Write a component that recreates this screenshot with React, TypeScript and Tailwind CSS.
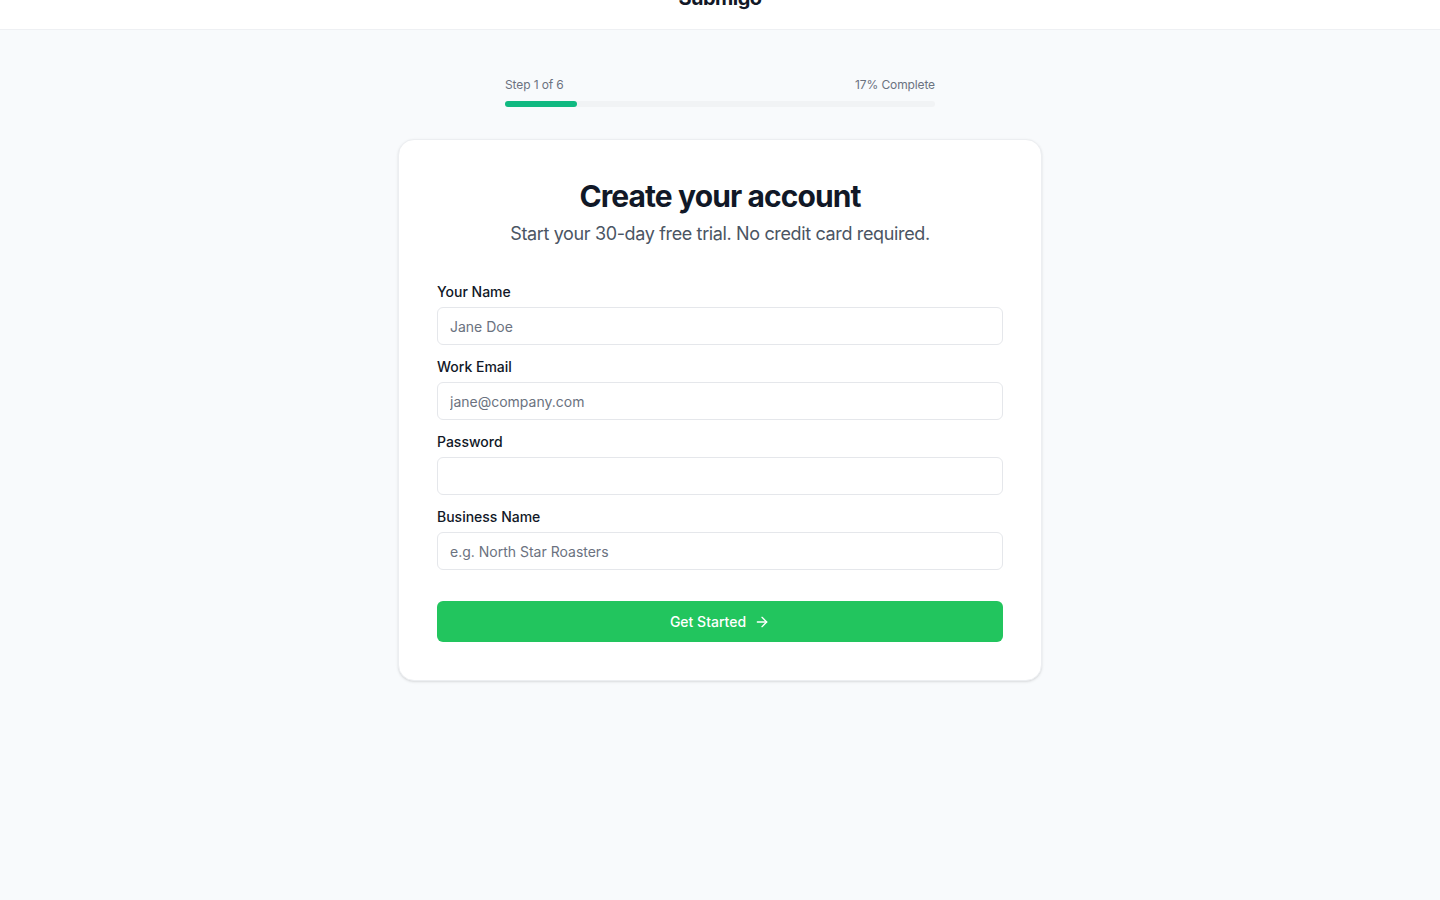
import { ArrowRight } from 'lucide-react'

const fields = [
  { label: 'Your Name', placeholder: 'Jane Doe', type: 'text' },
  { label: 'Work Email', placeholder: 'jane@company.com', type: 'email' },
  { label: 'Password', placeholder: '', type: 'password' },
  { label: 'Business Name', placeholder: 'e.g. North Star Roasters', type: 'text' },
]

export default function App() {
  return (
    <div className="min-h-screen bg-[#f8fafc] font-['Inter',sans-serif] text-[#111827]">
      {/* Top bar, scrolled a little */}
      <header className="h-[30px] overflow-hidden border-b border-[#eef0f3] bg-white">
        <div className="-mt-[34px] flex h-16 items-center justify-center">
          <span className="text-[20px] font-bold tracking-tight">Submigo</span>
        </div>
      </header>

      <main className="flex flex-col items-center pt-[46px]">
        {/* Progress */}
        <div className="w-[430px]">
          <div className="flex items-center justify-between text-[12px] tracking-[-0.01em] text-[#6b7280]">
            <span>Step 1 of 6</span>
            <span>17% Complete</span>
          </div>
          <div className="mt-[7px] h-[6px] w-full rounded-full bg-[#f1f3f5]">
            <div className="h-full rounded-full bg-[#10b981]" style={{ width: `${(1 / 6) * 100}%` }} />
          </div>
        </div>

        {/* Card */}
        <div className="mt-[32px] w-[644px] rounded-2xl border border-[#eceef1] bg-white p-[38px] shadow-sm">
          <h1 className="text-center text-[30px] font-bold leading-9 tracking-[-0.03em]">Create your account</h1>
          <p className="mt-[6px] text-center text-[18px] leading-7 tracking-[-0.02em] text-[#4b5563]">
            Start your 30-day free trial. No credit card required.
          </p>

          <form className="mt-[34px] flex flex-col gap-3" onSubmit={(e) => e.preventDefault()}>
            {fields.map((f) => (
              <div key={f.label}>
                <label className="block text-[14px] font-medium leading-5">{f.label}</label>
                <input
                  type={f.type}
                  placeholder={f.placeholder}
                  className="mt-[5px] h-[38px] w-full rounded-md border border-[#e5e7eb] px-3 text-[14px] placeholder:text-[#6b7280] focus:outline-none"
                />
              </div>
            ))}

            <button
              type="submit"
              className="mt-[19px] flex h-[41px] w-full items-center justify-center gap-2 rounded-md bg-[#22c55e] text-[14px] font-medium text-white"
            >
              Get Started
              <ArrowRight className="h-4 w-4" strokeWidth={2} />
            </button>
          </form>
        </div>
      </main>
    </div>
  )
}
